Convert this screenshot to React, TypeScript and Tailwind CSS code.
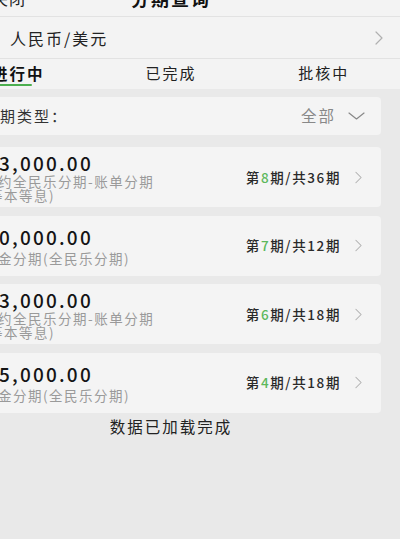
import React from "react";

type Plan = {
  amount: string;
  lines: string[];
  current: number;
  total: number;
};

const plans: Plan[] = [
  { amount: "13,000.00", lines: ["签约全民乐分期-账单分期", "(等本等息)"], current: 8, total: 36 },
  { amount: "10,000.00", lines: ["现金分期(全民乐分期)"], current: 7, total: 12 },
  { amount: "13,000.00", lines: ["签约全民乐分期-账单分期", "(等本等息)"], current: 6, total: 18 },
  { amount: "15,000.00", lines: ["现金分期(全民乐分期)"], current: 4, total: 18 },
];

function ChevronRight({ className }: { className?: string }) {
  return (
    <svg viewBox="0 0 8 14" className={className} fill="none">
      <path d="M1 1l6 6-6 6" stroke="#b0b0b0" strokeWidth="1.2" strokeLinecap="round" strokeLinejoin="round" />
    </svg>
  );
}

function ChevronDown() {
  return (
    <svg viewBox="0 0 17 8" className="h-[8px] w-[17px]" fill="none">
      <path d="M1 1l7.5 6L16 1" stroke="#888" strokeWidth="1.2" strokeLinecap="round" strokeLinejoin="round" />
    </svg>
  );
}

export default function App() {
  return (
    <div
      className="h-[539px] w-[400px] overflow-hidden bg-[#e9e9e9]"
      style={{ fontFamily: '"Noto Sans CJK SC", "Noto Sans", sans-serif' }}
    >
      <div className="-ml-[58px] w-[458px]">
        {/* Header */}
        <div className="relative flex h-[17px] items-end overflow-hidden border-b border-[#e2e2e2] bg-[#f3f3f3]">
          <span className="pb-[9px] pl-[50px] text-[16px] leading-[18px] tracking-[1px] text-[#222]">关闭</span>
          <span className="absolute inset-x-0 bottom-[9px] text-center text-[18px] font-bold leading-[18px] tracking-[2px] text-[#111]">
            分期查询
          </span>
        </div>

        {/* Currency */}
        <div className="flex h-[42px] items-center justify-between border-b border-[#e2e2e2] bg-[#f3f3f3] pl-[68px] pr-[17px]">
          <span className="text-[16px] tracking-[2px] text-[#222]">人民币/美元</span>
          <ChevronRight className="h-[14px] w-[8px]" />
        </div>

        {/* Tabs */}
        <div className="grid h-[30px] grid-cols-3 bg-[#f3f3f3]">
          <div className="flex flex-col items-center pt-[4px]">
            <span className="text-[15.5px] font-bold leading-[20px] tracking-[2px] text-[#111]">进行中</span>
            <div className="mr-[8px] mt-[1px] h-[2px] w-[36px] rounded bg-[#4caf50]" />
          </div>
          <div className="flex flex-col items-center pt-[4px]">
            <span className="text-[15px] leading-[20px] tracking-[2px] text-[#222]">已完成</span>
          </div>
          <div className="flex flex-col items-center pt-[4px]">
            <span className="text-[15px] leading-[20px] tracking-[2px] text-[#222]">批核中</span>
          </div>
        </div>

        {/* List */}
        <div className="px-[19px] pt-[8px]">
          <div className="flex h-[38px] items-center justify-between rounded-[4px] bg-[#f4f4f4] pl-[22px] pr-[16px]">
            <span className="text-[15px] tracking-[2px] text-[#333]">分期类型：</span>
            <div className="flex items-center gap-[12px]">
              <span className="text-[15.5px] tracking-[2px] text-[#888]">全部</span>
              <ChevronDown />
            </div>
          </div>

          <div className="mt-[12px] flex flex-col gap-[8.5px]">
            {plans.map((p, i) => (
              <div
                key={i}
                className="flex h-[60px] items-center justify-between rounded-[4px] bg-[#f4f4f4] pl-[22px] pr-[19px]"
              >
                <div className={`flex flex-col ${p.lines.length > 1 ? "gap-[1px]" : "gap-[4px]"}`}>
                  <span className="ml-[3px] text-[19px] font-medium leading-[20px] tracking-[2.2px] text-[#151515]">
                    {p.amount}
                  </span>
                  <div className="flex flex-col">
                    {p.lines.map((l) => (
                      <span key={l} className="text-[13.5px] leading-[14px] tracking-[1.5px] text-[#9a9a9a]">
                        {l}
                      </span>
                    ))}
                  </div>
                </div>
                <div className="flex items-center gap-[14px]">
                  <span className="text-[13.5px] font-medium tracking-[1.6px] text-[#2a2a2a]">
                    第<span className="text-[#5cb85c]">{p.current}</span>期/共{p.total}期
                  </span>
                  <ChevronRight className="h-[13px] w-[7px]" />
                </div>
              </div>
            ))}
          </div>

          <div className="mt-[4px] text-center text-[15.5px] leading-[18px] tracking-[2px] text-[#222]">数据已加载完成</div>
        </div>
      </div>
    </div>
  );
}
